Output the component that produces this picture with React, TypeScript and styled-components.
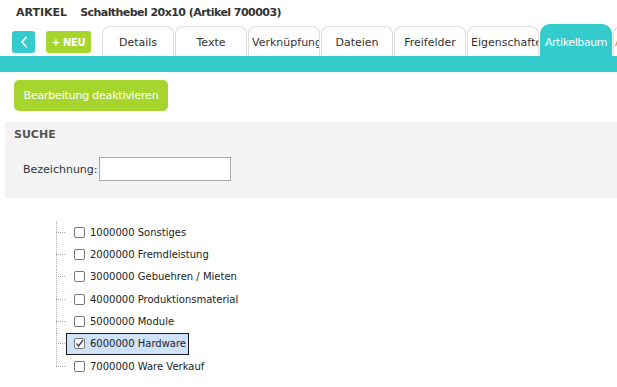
import styled, { createGlobalStyle } from "styled-components";

const GlobalStyle = createGlobalStyle`
  html, body {
    margin: 0;
    padding: 0;
    background: #ffffff;
  }
  body {
    font-family: "DejaVu Sans", Verdana, sans-serif;
    color: #333333;
    overflow: hidden;
  }
`;

const TEAL = "#33cbcb";
const GREEN = "#a6d62e";

const tabs = [
  "Details",
  "Texte",
  "Verknüpfung",
  "Dateien",
  "Freifelder",
  "Eigenschaften",
  "Artikelbaum",
  "Änderungshistorie",
];

const categories = [
  { code: "1000000", name: "Sonstiges" },
  { code: "2000000", name: "Fremdleistung" },
  { code: "3000000", name: "Gebuehren / Mieten" },
  { code: "4000000", name: "Produktionsmaterial" },
  { code: "5000000", name: "Module" },
  { code: "6000000", name: "Hardware", checked: true },
  { code: "7000000", name: "Ware Verkauf" },
];

export default function App() {
  return (
    <Page>
      <GlobalStyle />
      <TitleRow>
        <Section>ARTIKEL</Section>
        <Product>Schalthebel 20x10 (Artikel 700003)</Product>
      </TitleRow>

      <NavRow>
        <BackButton aria-label="Zurück">
          <svg width="8" height="12" viewBox="0 0 8 12">
            <path d="M6 1.5 L2 6 L6 10.5" fill="none" stroke="#fff" strokeWidth="1.8" strokeLinecap="round" strokeLinejoin="round" />
          </svg>
        </BackButton>
        <NewButton>+ NEU</NewButton>
        <Tabs>
          {tabs.map((t) => (
            <Tab key={t} $active={t === "Artikelbaum"} $warn={t === "Änderungshistorie"}>
              {t}
            </Tab>
          ))}
        </Tabs>
      </NavRow>
      <TealBar />

      <Content>
        <ActionButton>Bearbeitung deaktivieren</ActionButton>

        <SearchPanel>
          <PanelTitle>SUCHE</PanelTitle>
          <Field>
            <label htmlFor="bez">Bezeichnung:</label>
            <TextInput id="bez" type="text" />
          </Field>
        </SearchPanel>

        <Tree>
          {categories.map((c, i) => (
            <TreeRow key={c.code}>
              <Connector $last={i === categories.length - 1} />
              <Node $selected={!!c.checked}>
                <Box $checked={!!c.checked}>
                  {c.checked && (
                    <svg width="9" height="9" viewBox="0 0 9 9">
                      <path d="M1.5 4.5 L3.6 7 L8 1" fill="none" stroke="#444" strokeWidth="1.4" />
                    </svg>
                  )}
                </Box>
                <span>
                  {c.code} {c.name}
                </span>
              </Node>
            </TreeRow>
          ))}
        </Tree>
      </Content>
    </Page>
  );
}

const Page = styled.div`
  width: 617px;
  height: 387px;
  overflow: hidden;
`;

const TitleRow = styled.div`
  height: 24px;
  padding-left: 16px;
  display: flex;
  align-items: center;
  gap: 13px;
  font-weight: bold;
  color: #333;
`;

const Section = styled.span`
  font-size: 11px;
`;

const Product = styled.span`
  font-size: 11px;
  letter-spacing: -0.55px;
`;

const NavRow = styled.div`
  height: 32px;
  padding-left: 12px;
  display: flex;
  align-items: flex-end;
  overflow: hidden;
`;

const SmallButton = styled.button`
  height: 22px;
  margin-bottom: 3px;
  border: none;
  border-radius: 3px;
  color: #fff;
  padding: 0;
  display: flex;
  align-items: center;
  justify-content: center;
  font-family: inherit;
  flex-shrink: 0;
`;

const BackButton = styled(SmallButton)`
  width: 23px;
  background: ${TEAL};
`;

const NewButton = styled(SmallButton)`
  width: 45px;
  margin-left: 11px;
  background: ${GREEN};
  font-size: 10px;
  font-weight: bold;
  letter-spacing: -0.3px;
`;

const Tabs = styled.div`
  margin-left: 11px;
  display: flex;
  align-items: flex-end;
  gap: 1px;
  height: 32px;
`;

const Tab = styled.div<{ $active?: boolean; $warn?: boolean }>`
  flex-shrink: 0;
  box-sizing: border-box;
  width: 72px;
  height: ${(p) => (p.$active ? "32px" : "30px")};
  padding: ${(p) => (p.$active ? "6px 2px 0" : "4px 3px 0")};
  ${(p) => (p.$warn ? "padding-left: 1px;" : "")}
  line-height: 24px;
  text-align: ${(p) => (p.$warn ? "left" : "center")};
  overflow: hidden;
  white-space: nowrap;
  font-size: 11px;
  letter-spacing: ${(p) => (p.$active ? "-0.4px" : "0")};
  color: ${(p) => (p.$active ? "#fff" : p.$warn ? "#e58a22" : "#333")};
  background: ${(p) => (p.$active ? TEAL : "#fff")};
  border: 1px solid ${(p) => (p.$active ? TEAL : "#dedede")};
  border-bottom: none;
  border-radius: ${(p) => (p.$active ? "10px 10px 0 0" : "8px 8px 0 0")};
`;

const TealBar = styled.div`
  height: 16px;
  background: ${TEAL};
`;

const Content = styled.div`
  padding: 8px 0 0 5px;
`;

const ActionButton = styled.button`
  margin-left: 9px;
  width: 154px;
  height: 31px;
  border: none;
  border-radius: 5px;
  background: ${GREEN};
  color: #fff;
  font-family: inherit;
  font-size: 11px;
  letter-spacing: -0.2px;
  padding: 0;
`;

const SearchPanel = styled.div`
  margin-top: 11px;
  height: 76px;
  box-sizing: border-box;
  padding: 6px 0 0 9px;
  background: #f4f4f4;
`;

const PanelTitle = styled.div`
  font-size: 11px;
  font-weight: bold;
  color: #555;
  line-height: 13px;
`;

const Field = styled.div`
  margin-top: 16px;
  padding-left: 9px;
  display: flex;
  align-items: center;
  gap: 1px;
  font-size: 11px;
  color: #333;
`;

const TextInput = styled.input`
  width: 132px;
  height: 24px;
  box-sizing: border-box;
  border: 1px solid #a8a8a8;
  background: #fff;
  margin: 0;
  padding: 2px 4px;
`;

const Tree = styled.div`
  margin: 23px 0 0 51px;
  display: flex;
  flex-direction: column;
`;

const TreeRow = styled.div`
  height: 22.35px;
  display: flex;
  align-items: center;
`;

const Connector = styled.span<{ $last?: boolean }>`
  width: 10px;
  align-self: stretch;
  background-image: repeating-linear-gradient(to bottom, #a9a9a9 0 1px, transparent 1px 2px),
    repeating-linear-gradient(to right, #a9a9a9 0 1px, transparent 1px 2px);
  background-size: 1px ${(p) => (p.$last ? "50%" : "100%")}, 100% 1px;
  background-position: 0 0, 0 50%;
  background-repeat: no-repeat;
`;

const Node = styled.span<{ $selected?: boolean }>`
  height: 22px;
  box-sizing: border-box;
  display: flex;
  align-items: center;
  gap: 5px;
  padding: 0 2px 0 7px;
  border: 1px solid ${(p) => (p.$selected ? "#1a1a1a" : "transparent")};
  background: ${(p) => (p.$selected ? "#cfe2fb" : "transparent")};
  font-size: 10px;
  color: #222;
  white-space: nowrap;
`;

const Box = styled.span<{ $checked?: boolean }>`
  width: 11px;
  height: 11px;
  box-sizing: border-box;
  border: 1px solid #7d7575;
  border-radius: 2px;
  background: #fff;
  display: flex;
  align-items: center;
  justify-content: center;
`;
